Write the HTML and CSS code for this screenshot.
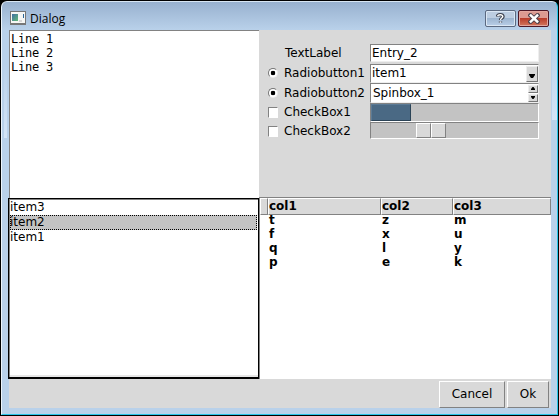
FILE: index.html
```html
<!DOCTYPE html>
<html lang="en">
<head>
<meta charset="utf-8">
<title>Dialog</title>
<link rel="stylesheet" href="styles.css">
</head>
<body>
<div class="window">
  <header class="titlebar">
    <svg class="app-icon" width="16" height="14" viewBox="0 0 16 14">
      <defs><linearGradient id="pic" x2="1" y2="1"><stop stop-color="#416fa5"/><stop offset="1" stop-color="#62ba76"/></linearGradient></defs>
      <path fill="#777" d="M0 0h16v14H0z"/><path fill="#f7f7f5" d="M1 1h14v11H1z"/>
      <path fill="url(#pic)" d="M2 3h6v7H2z"/><path fill="#d7d7d7" d="M9 9h3v2H9z"/><path fill="#2e6798" d="M13 3h1v4h-1z"/>
    </svg>
    <h1>Dialog</h1>
    <button class="caption help" aria-label="Help"><svg width="9" height="11" viewBox="0 0 9 11"><path d="M1.5 3.5Q1.5 1.7 4.3 1.7T7 3.7C7 5.2 4.5 5 4.5 7M4.5 8.6v1" fill="none" stroke="#3c404c" stroke-width="3.4"/><path d="M1.5 3.1Q2 1.7 4.3 1.7T6.8 3.6C6.8 5 4.5 5 4.5 7M4.5 8.4v1.4" fill="none" stroke="#fff" stroke-width="1.4"/></svg></button>
    <button class="caption close" aria-label="Close"><svg width="12" height="11" viewBox="0 0 12 11"><path d="M2.5 2.3l7 6.4M9.5 2.3l-7 6.4" stroke="#50434d" stroke-width="4.4" stroke-linecap="square"/><path d="M2.8 2.5l6.4 6M9.2 2.5l-6.4 6" stroke="#fff" stroke-width="2.4" stroke-linecap="square"/></svg></button>
  </header>
  <main>
    <section class="left">
      <div class="text">Line 1<br>Line 2<br>Line 3</div>
      <ul class="list"><li>item3</li><li class="selected">item2</li><li>item1</li></ul>
    </section>
    <section class="right">
      <div class="form">
        <label class="plain">TextLabel</label>
        <div class="field">Entry_2</div>
        <label><i class="radio"></i>Radiobutton1</label>
        <div class="field combo"><span>item1</span><b class="step"><svg width="6" height="4"><path d="M0 0h6v1L4 4H2L0 1z"/></svg></b></div>
        <label><i class="radio"></i>Radiobutton2</label>
        <div class="field spin"><span>Spinbox_1</span><div class="steps"><b class="step"><svg width="4" height="3"><path d="M0 3V2l1.5-2h1L4 2v1z"/></svg></b><b class="step"><svg width="4" height="3"><path d="M0 0v1l1.5 2h1L4 1V0z"/></svg></b></div></div>
        <label><i class="check"></i>CheckBox1</label>
        <div class="trough"><div class="bar"></div></div>
        <label><i class="check"></i>CheckBox2</label>
        <div class="trough scale"><b></b><b></b></div>
      </div>
      <div class="table">
        <div class="row head"><span></span><span>col1</span><span>col2</span><span>col3</span></div>
        <div class="row"><span></span><span>t</span><span>z</span><span>m</span></div>
        <div class="row"><span></span><span>f</span><span>x</span><span>u</span></div>
        <div class="row"><span></span><span>q</span><span>l</span><span>y</span></div>
        <div class="row"><span></span><span>p</span><span>e</span><span>k</span></div>
      </div>
    </section>
    <footer><button class="push cancel">Cancel</button><button class="push ok">Ok</button></footer>
  </main>
</div>
</body>
</html>
```
FILE: styles.css
```css
* { box-sizing: border-box; }
body { margin: 0; background: #000; font: 12px/14px "DejaVu Sans", sans-serif; color: #000; }
button { font: inherit; color: inherit; margin: 0; padding: 0; }
svg { display: block; }
.window {
  width: 557px; height: 414px; margin: 1px; padding: 0 6px 6px 7px;
  border: 1px solid #29c4e8; border-left-color: #edf5fc; border-top-color: #d8e6f3;
  border-radius: 6px 6px 0 0;
  background:
    linear-gradient(#d4e4f600, #d4e4f6) 2px 62px / 3px 74px no-repeat,
    linear-gradient(#d4e4f600, #d4e4f6) 550px 36px / 5px 82px no-repeat,
    linear-gradient(#98b1cf, #b9d1ea 28px, #b9d1ea);
}
.titlebar { height: 28px; display: flex; align-items: flex-start; }
.app-icon { margin: 9px 5px 0 1px; }
h1 { margin: 8px 0 0 -1px; flex: 1; font: 12px/17px "Open Sans", sans-serif; }
.caption {
  width: 31px; height: 17px; margin-top: 8px; border: 1px solid #5b6980; border-radius: 2px;
  display: grid; place-items: center; box-shadow: inset 0 0 0 1px #dbe7f4;
  background: linear-gradient(#bccde1 48%, #9db5d0 50%, #b9cfe8);
}
.close { margin: 8px 2px 0 2px; border-color: #4c1726; box-shadow: inset 0 0 0 1px #e2a79f; background: linear-gradient(#dc9a91 46%, #b93d2b 50%, #d2775f); }
main { height: 378px; display: grid; grid-template: 349px 29px / 250px 292px; background: #d9d9d9; }
.left, .right { display: flex; flex-direction: column; }
.text {
  height: 168px; padding: 1px 1px 0; background: #fff; border-left: 1px solid #828282; border-top: 1px solid #828282;
  font-family: "DejaVu Sans Mono", monospace; letter-spacing: -.22px;
}
.list { height: 181px; flex: none; margin: 0 0 0 -1px; padding: 1px 0 0; list-style: none; background: #fff; border: 1px solid #000; border-bottom-width: 2px; box-shadow: inset 1px 1px #828282, inset 0 -2px #e7e7e7; }
.list li { height: 15px; line-height: 15px; padding-left: 0; margin: 0 1px; }
.list .selected { background: #c3c3c3; outline: 1px dotted #000; outline-offset: -1px; }
.form { height: 167px; padding: 14px 12px 0 9px; display: grid; grid-template-columns: 102px 169px; grid-template-rows: 19px 20px 20px 19px 18px; align-content: start; }
.form label { display: flex; align-items: center; line-height: 17px; }
.plain { padding-left: 17px; }
.radio { width: 10px; height: 10px; margin-right: 6px; border: 1px solid #777; border-right-color: #eee; border-bottom-color: #eee; border-radius: 50%; background: radial-gradient(circle, #000 2px, #fff 2.6px); }
.check { width: 10px; height: 11px; margin-right: 6px; background: #fff; border: 1px solid #828282; border-right-color: #fff; border-bottom-color: #fff; }
.field { height: 18px; padding-left: 1px; line-height: 16px; background: #fff; border: 1px solid #828282; border-right-color: #eee; border-bottom-color: #eee; display: flex; }
.combo { margin-top: 1px; height: 19px; line-height: 17px; }
.spin { height: 20px; padding-left: 2px; line-height: 18px; }
.field span { flex: 1; }
.step { display: grid; place-items: center; background: #d9d9d9; border: 1px solid #eee; border-right-color: #777; border-bottom-color: #777; }
.combo .step { width: 12px; height: 16px; padding-top: 4px; margin-top: 1px; }
.steps { margin-top: 1px; }
.spin .step { width: 10px; height: 8px; margin-bottom: 1px; padding-bottom: 1px; }
.trough { height: 19px; background: #c3c3c3; border: 1px solid #828282; border-right-color: #fff; border-bottom-color: #fff; }
.bar { width: 40px; height: 17px; background: #4a6984; border: 1px solid #5c7b96; border-right-color: #2b4356; border-bottom-color: #2b4356; }
.scale { height: 17px; display: flex; padding-left: 45px; }
.scale b { width: 15px; height: 15px; background: #d9d9d9; border: 1px solid #fff; border-right-color: #828282; border-bottom-color: #828282; }
.table { height: 182px; background: #fff; border: 1px solid #828282; border-width: 1px 0 0 1px; font-weight: bold; }
.row { height: 14px; display: grid; grid-template-columns: 8px 113px 72px 98px; }
.row span { line-height: 14px; padding-left: 1px; }
.head { height: 16px; margin-bottom: -1px; }
.head span { background: #d9d9d9; border: 1px solid #fff; border-right-color: #828282; border-bottom-color: #828282; line-height: 15px; padding-left: 0; }
footer { grid-column: 1 / 3; display: flex; justify-content: flex-end; gap: 2px; padding: 2px 2px 0; }
.push { height: 27px; padding-bottom: 2px; background: #d9d9d9; border: 1px solid #fff; border-right-color: #828282; border-bottom-color: #828282; }
.cancel { width: 66px; }
.ok { width: 42px; }
```
